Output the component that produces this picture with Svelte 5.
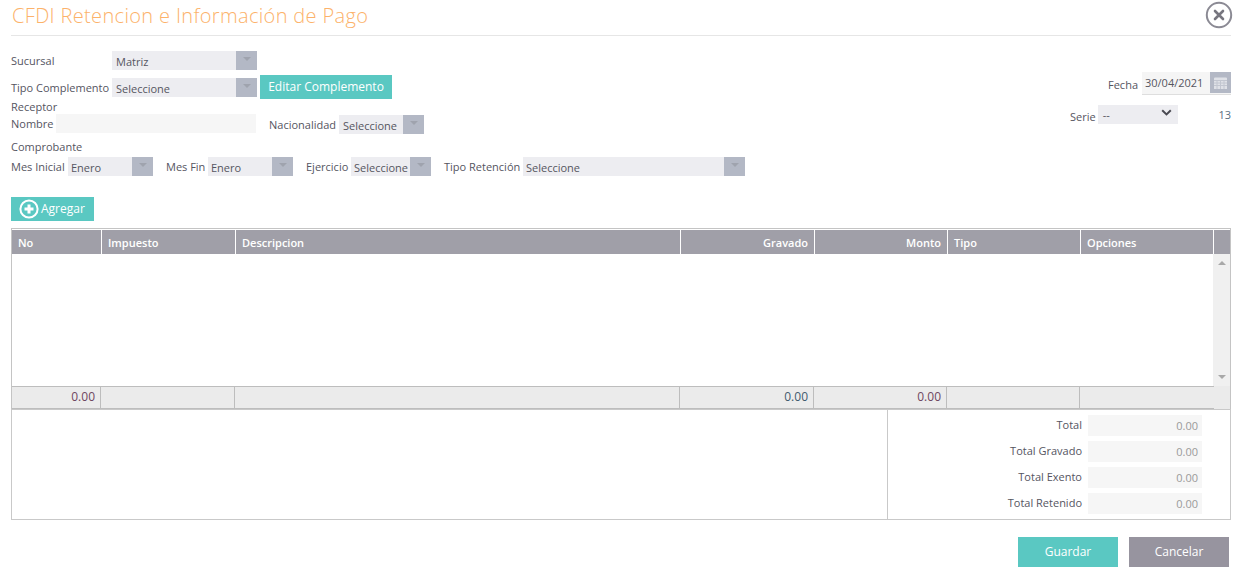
<script>
  const columns = [
    { name: 'No', width: 90, footWidth: 89, total: '0.00', tone: 'red' },
    { name: 'Impuesto', width: 134, footWidth: 134, total: '' },
    { name: 'Descripcion', width: 445, footWidth: 445, total: '' },
    { name: 'Gravado', width: 134, footWidth: 134, total: '0.00', right: true, tone: 'dark' },
    { name: 'Monto', width: 133, footWidth: 133, total: '0.00', right: true, tone: 'red' },
    { name: 'Tipo', width: 133, footWidth: 133, total: '' },
    { name: 'Opciones', width: 133, footWidth: 134, total: '' }
  ];
  const totals = ['Total', 'Total Gravado', 'Total Exento', 'Total Retenido'];
</script>

{#snippet combo(value, cls)}
  <div class="combo {cls}">
    <span class="combo-value">{value}</span>
    <span class="combo-arrow"><i></i></span>
  </div>
{/snippet}

<div class="page">
  <header class="title-bar">
    <h1>CFDI Retencion e Información de Pago</h1>
    <svg class="close" width="28" height="28" viewBox="0 0 28 28" aria-label="Cerrar">
      <circle cx="14" cy="14" r="12.2" fill="none" stroke="#8b8a94" stroke-width="2" />
      <path d="M10 10l8 8M18 10l-8 8" stroke="#77767f" stroke-width="2.6" stroke-linecap="round" />
    </svg>
  </header>

  <div class="form">
    <div class="form-left">
      <div class="row row-sucursal">
        <label class="w-101">Sucursal</label>
        {@render combo('Matriz', 'w-145')}
      </div>
      <div class="row row-tipo">
        <label class="w-101">Tipo Complemento</label>
        {@render combo('Seleccione', 'w-145')}
        <button class="btn btn-edit">Editar Complemento</button>
      </div>
      <div class="section receptor">Receptor</div>
      <div class="row row-nombre">
        <label class="w-45">Nombre</label>
        <input class="text-input" type="text" />
        <label class="nac">Nacionalidad</label>
        {@render combo('Seleccione', 'w-85 drop')}
      </div>
      <div class="section comprobante">Comprobante</div>
      <div class="row row-comp">
        <label class="w-57">Mes Inicial</label>
        {@render combo('Enero', 'w-85')}
        <label class="mes-fin">Mes Fin</label>
        {@render combo('Enero', 'w-85')}
        <label class="ejercicio">Ejercicio</label>
        {@render combo('Seleccione', 'w-80')}
        <label class="retencion">Tipo Retención</label>
        {@render combo('Seleccione', 'w-222')}
      </div>
    </div>

    <div class="form-right">
      <div class="fecha">
        <label>Fecha</label>
        <div class="date">
          <span>30/04/2021</span>
          <span class="date-btn">
            <svg width="15" height="14" viewBox="0 0 15 14">
              <path d="M2 1.5h11a1 1 0 0 1 1 1V13H1V2.5a1 1 0 0 1 1-1z" fill="#dfe1e7" />
              <path d="M1 4.5h13M1 7h13M1 9.5h13M4 4.5V13M7.5 4.5V13M11 4.5V13" stroke="#c2c6d0" stroke-width="1" />
            </svg>
          </span>
        </div>
      </div>
      <div class="serie">
        <label>Serie</label>
        <div class="serie-select">
          <span>--</span>
          <svg width="11" height="7" viewBox="0 0 11 7"><path d="M1.2 1.2l4.3 4.2 4.3-4.2" fill="none" stroke="#4a4a52" stroke-width="2" /></svg>
        </div>
        <span class="folio">13</span>
      </div>
    </div>
  </div>

  <button class="btn btn-add">
    <svg width="20" height="20" viewBox="0 0 20 20">
      <circle cx="10" cy="10" r="8.6" fill="none" stroke="#fff" stroke-width="2" />
      <path d="M10 5.5v9M5.5 10h9" stroke="#fff" stroke-width="3" />
    </svg>
    <span>Agregar</span>
  </button>

  <div class="grid">
    <div class="grid-head">
      {#each columns as col}
        <div class="cell" class:right={col.right} style="width: {col.width}px">{col.name}</div>
      {/each}
      <div class="head-end"></div>
    </div>
    <div class="grid-body">
      <div class="rows"></div>
      <div class="scroll">
        <i class="up"></i>
        <i class="down"></i>
      </div>
    </div>
    <div class="grid-foot">
      <div class="foot-cells">
        {#each columns as col}
          <div class="foot-cell {col.tone ?? ''}" style="width: {col.footWidth}px">{col.total}</div>
        {/each}
      </div>
    </div>
  </div>

  <div class="summary">
    <div class="summary-left"></div>
    <div class="summary-right">
      {#each totals as label}
        <div class="total-row">
          <label>{label}</label>
          <div class="total-value">0.00</div>
        </div>
      {/each}
    </div>
  </div>

  <footer class="actions">
    <button class="btn big save">Guardar</button>
    <button class="btn big cancel">Cancelar</button>
  </footer>
</div>

<style>
  :global(body) {
    margin: 0;
    background: #fff;
  }

  .page {
    width: 1239px;
    height: 576px;
    box-sizing: border-box;
    padding: 0 8px 0 11px;
    overflow: hidden;
    font-family: "Open Sans", sans-serif;
    font-size: 11px;
    color: #55555f;
  }

  .title-bar {
    height: 35px;
    display: flex;
    justify-content: space-between;
    border-bottom: 1px solid #e6e6e6;
  }

  h1 {
    margin: 3px 0 0 1px;
    font-size: 20px;
    line-height: 26px;
    font-weight: 300;
    letter-spacing: 0.34px;
    color: #fcb26a;
  }

  .close {
    margin: 1px -2px 0 0;
  }

  label {
    white-space: nowrap;
    font-size: 11px;
  }

  .form {
    display: flex;
    justify-content: space-between;
    height: 161px;
  }

  .form-left {
    padding-top: 15px;
  }

  .row {
    display: flex;
    align-items: center;
  }

  .row-sucursal {
    height: 19px;
    margin-bottom: 5px;
  }

  .row-tipo {
    height: 24px;
  }

  .row-tipo .combo {
    align-self: flex-start;
    margin-top: 3px;
  }

  .row-nombre {
    height: 19px;
  }

  .row-comp {
    height: 19px;
    margin-top: 3px;
  }

  .row-comp .combo-value {
    padding-left: 3px;
  }

  .section {
    line-height: 14px;
  }

  .receptor {
    margin-top: 1px;
  }

  .comprobante {
    margin-top: 7px;
  }

  .w-101 {
    width: 101px;
  }

  .w-45 {
    width: 45px;
  }

  .w-57 {
    width: 57px;
  }

  .nac {
    margin: 2px 0 0 13px;
    width: 70px;
  }

  .drop {
    margin-top: 2px;
  }

  .mes-fin {
    margin-left: 13px;
    width: 42px;
  }

  .ejercicio {
    margin-left: 13px;
    width: 45px;
  }

  .retencion {
    margin-left: 13px;
    width: 79px;
  }

  .combo {
    height: 19px;
    display: flex;
    justify-content: space-between;
    background: #ededf1;
    flex: none;
  }

  .combo-value {
    padding: 2px 0 0 4px;
    font-size: 11px;
    line-height: 18px;
  }

  .combo-arrow {
    width: 21px;
    background: #b3b8c5;
    display: flex;
    justify-content: center;
    padding-top: 6px;
    box-sizing: border-box;
  }

  .combo-arrow i {
    width: 0;
    height: 0;
    border-left: 4px solid transparent;
    border-right: 4px solid transparent;
    border-top: 4px solid #9fa3ae;
  }

  .w-145 {
    width: 145px;
  }

  .w-85 {
    width: 85px;
  }

  .w-80 {
    width: 80px;
  }

  .w-222 {
    width: 222px;
  }

  .text-input {
    width: 200px;
    height: 19px;
    border: 0;
    padding: 0;
    background: #f6f6f6;
  }

  .btn {
    border: 0;
    color: #fff;
    background: #5ac8c2;
    font-family: inherit;
    padding: 0;
  }

  .btn-edit {
    width: 132px;
    height: 24px;
    margin-left: 3px;
    font-size: 12px;
    line-height: 22px;
  }

  .form-right {
    width: 161px;
    padding-top: 36px;
  }

  .fecha {
    display: flex;
    justify-content: flex-end;
    align-items: center;
    height: 23px;
  }

  .fecha label {
    margin-right: 4px;
    margin-top: 2px;
  }

  .date {
    width: 89px;
    height: 23px;
    display: flex;
    justify-content: space-between;
    box-sizing: border-box;
    background: #f5f5f5;
    border-bottom: 1px solid #dedede;
    font-size: 11px;
    line-height: 21px;
    padding-left: 3px;
  }

  .date-btn {
    width: 21px;
    height: 21px;
    background: #b3b8c5;
    display: flex;
    align-items: center;
    justify-content: center;
  }

  .serie {
    display: flex;
    align-items: center;
    height: 19px;
    margin-top: 10px;
  }

  .serie label {
    margin: 4px 2px 0 0;
  }

  .serie-select {
    width: 80px;
    height: 19px;
    box-sizing: border-box;
    background: #ededf1;
    display: flex;
    justify-content: space-between;
    align-items: center;
    padding: 0 6px 0 5px;
    font-size: 11px;
  }

  .serie-select svg {
    margin-top: -5px;
  }

  .folio {
    margin-left: auto;
    color: #5a6c7e;
  }

  .btn-add {
    width: 83px;
    height: 24px;
    display: flex;
    align-items: center;
    gap: 2px;
    padding-left: 8px;
    font-size: 12px;
  }

  .btn-add span {
    padding-bottom: 2px;
  }

  .grid {
    margin-top: 7px;
    width: 1220px;
    height: 181px;
    box-sizing: border-box;
    border: 1px solid #c4c4c4;
    border-bottom: 0;
    padding-top: 1px;
    display: flex;
    flex-direction: column;
  }

  .grid-head {
    display: flex;
    height: 24px;
    background: #a09fa8;
    color: #fff;
    font-weight: 600;
    flex: none;
  }

  .cell {
    box-sizing: border-box;
    border-right: 1px solid #fff;
    padding: 0 6px;
    line-height: 26px;
  }

  .cell.right {
    text-align: right;
  }

  .head-end {
    flex: 1;
  }

  .grid-body {
    flex: none;
    height: 132px;
    display: flex;
  }

  .rows {
    flex: 1;
  }

  .scroll {
    width: 17px;
    background: #f0f0f0;
    display: flex;
    flex-direction: column;
    justify-content: space-between;
    align-items: center;
    padding: 7px 0 7px;
    box-sizing: border-box;
  }

  .scroll i {
    width: 0;
    height: 0;
    border-left: 4px solid transparent;
    border-right: 4px solid transparent;
  }

  .up {
    border-bottom: 4px solid #a8a8a8;
  }

  .down {
    border-top: 4px solid #a8a8a8;
  }

  .grid-foot {
    flex: none;
    height: 23px;
    background: #ebebeb;
    font-size: 12px;
  }

  .foot-cells {
    display: flex;
    width: 1202px;
    height: 23px;
    box-sizing: border-box;
    border-top: 1px solid #bdbdbd;
    border-bottom: 1px solid #bdbdbd;
  }

  .foot-cell {
    box-sizing: border-box;
    border-right: 1px solid #bdbdbd;
    padding-right: 5px;
    text-align: right;
    line-height: 20px;
  }

  .foot-cell:last-child {
    border-right: 0;
  }

  .foot-cell.red {
    color: #6e4660;
  }

  .foot-cell.dark {
    color: #3f5a6e;
  }

  .summary {
    width: 1220px;
    height: 111px;
    box-sizing: border-box;
    border: 1px solid #c9c9c9;
    display: flex;
  }

  .summary-left {
    width: 875px;
    border-right: 1px solid #c9c9c9;
  }

  .summary-right {
    padding-top: 5px;
  }

  .total-row {
    display: flex;
    align-items: center;
    justify-content: flex-end;
    width: 314px;
    height: 21px;
    margin-bottom: 5px;
  }

  .total-row label {
    margin-right: 6px;
    margin-top: -2px;
  }

  .total-value {
    width: 114px;
    height: 21px;
    background: #f6f6f6;
    color: #9a9a9a;
    text-align: right;
    box-sizing: border-box;
    padding-right: 4px;
    line-height: 21px;
  }

  .actions {
    display: flex;
    justify-content: flex-end;
    gap: 11px;
    width: 1218px;
    margin-top: 17px;
  }

  .big {
    width: 100px;
    height: 30px;
    font-size: 12px;
    padding-bottom: 2px;
  }

  .cancel {
    background: #97949f;
  }
</style>
